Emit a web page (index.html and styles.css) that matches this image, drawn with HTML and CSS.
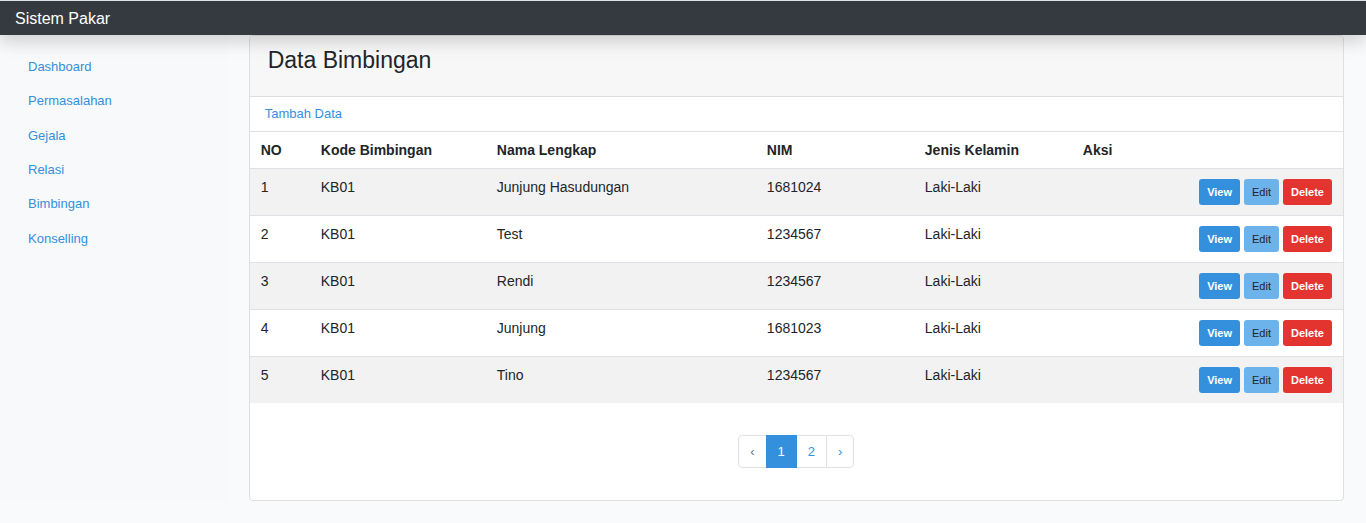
FILE: index.html
```html
<!DOCTYPE html>
<html lang="id">
<head>
<meta charset="utf-8">
<meta name="viewport" content="width=device-width, initial-scale=1">
<title>Sistem Pakar</title>
<link rel="stylesheet" href="styles.css">
</head>
<body>
<header class="topbar"><a class="brand" href="#">Sistem Pakar</a></header>
<div class="layout">
  <nav class="sidebar" aria-label="Menu">
    <ul class="menu">
      <li><a href="#">Dashboard</a></li>
      <li><a href="#">Permasalahan</a></li>
      <li><a href="#">Gejala</a></li>
      <li><a href="#">Relasi</a></li>
      <li><a href="#">Bimbingan</a></li>
      <li><a href="#">Konselling</a></li>
    </ul>
  </nav>
  <main class="content">
    <section class="card">
      <div class="card-header"><h1 class="title">Data Bimbingan</h1></div>
      <div class="toolbar"><a href="#">Tambah Data</a></div>
      <table class="table">
        <colgroup><col class="col-no"><col class="col-kode"><col class="col-nama"><col class="col-nim"><col class="col-jenis"><col></colgroup>
        <thead>
          <tr><th scope="col">NO</th><th scope="col">Kode Bimbingan</th><th scope="col">Nama Lengkap</th><th scope="col">NIM</th><th scope="col">Jenis Kelamin</th><th scope="col">Aksi</th></tr>
        </thead>
        <tbody>
          <tr><td>1</td><td>KB01</td><td>Junjung Hasudungan</td><td>1681024</td><td>Laki-Laki</td><td><div class="actions"><button class="btn view" type="button">View</button><button class="btn edit" type="button">Edit</button><button class="btn delete" type="button">Delete</button></div></td></tr>
          <tr><td>2</td><td>KB01</td><td>Test</td><td>1234567</td><td>Laki-Laki</td><td><div class="actions"><button class="btn view" type="button">View</button><button class="btn edit" type="button">Edit</button><button class="btn delete" type="button">Delete</button></div></td></tr>
          <tr><td>3</td><td>KB01</td><td>Rendi</td><td>1234567</td><td>Laki-Laki</td><td><div class="actions"><button class="btn view" type="button">View</button><button class="btn edit" type="button">Edit</button><button class="btn delete" type="button">Delete</button></div></td></tr>
          <tr><td>4</td><td>KB01</td><td>Junjung</td><td>1681023</td><td>Laki-Laki</td><td><div class="actions"><button class="btn view" type="button">View</button><button class="btn edit" type="button">Edit</button><button class="btn delete" type="button">Delete</button></div></td></tr>
          <tr><td>5</td><td>KB01</td><td>Tino</td><td>1234567</td><td>Laki-Laki</td><td><div class="actions"><button class="btn view" type="button">View</button><button class="btn edit" type="button">Edit</button><button class="btn delete" type="button">Delete</button></div></td></tr>
        </tbody>
      </table>
      <nav class="pager" aria-label="Halaman">
        <ul class="pages">
          <li><span class="page disabled">‹</span></li>
          <li><span class="page active" aria-current="page">1</span></li>
          <li><a class="page" href="#">2</a></li>
          <li><a class="page" href="#">›</a></li>
        </ul>
      </nav>
    </section>
  </main>
</div>
</body>
</html>
```

FILE: styles.css
```css
* { box-sizing: border-box; }
body {
  margin: 0;
  background: #f8fafc;
  color: #212529;
  font: 14px/16px "Liberation Sans", Arial, sans-serif;
}
a { color: #3490dc; text-decoration: none; }
ul { margin: 0; padding: 0; list-style: none; }

.topbar {
  position: sticky;
  top: 0;
  z-index: 10;
  display: flex;
  align-items: center;
  height: 35px;
  padding: 1px 15px 0;
  border-top: 1px solid #dee2e6;
  background: #343a40;
  box-shadow: 0 8px 16px rgba(0, 0, 0, .15);
}
.brand { color: #fff; font-size: 16px; line-height: 24px; }

.layout { display: flex; padding-bottom: 22px; }
.sidebar { flex: 0 0 16.6667%; background: #f8f9fa; padding-top: 15px; }
.menu { display: grid; grid-auto-rows: 1fr; min-height: 206px; font-size: 13px; }
.menu a { display: flex; align-items: center; height: 100%; padding: 0 28px; }
.content { flex: 1; min-width: 0; padding: 0 22px 0 21px; }

.card { border: 1px solid #dfdfdf; border-radius: 4px; background: #fff; }
.card-header {
  height: 61px;
  padding: 10px 18px;
  border-bottom: 1px solid #dfdfdf;
  border-radius: 3px 3px 0 0;
  background: #f7f7f7;
}
.title { margin: 0; font-size: 23px; font-weight: 400; line-height: 28px; }
.toolbar { padding: 9px 15px; font-size: 13px; }

.table { width: 100%; table-layout: fixed; border-collapse: separate; border-spacing: 0; }
.col-no { width: 5.5%; }
.col-kode { width: 16.1%; }
.col-nama { width: 24.7%; }
.col-nim, .col-jenis { width: 14.45%; }
.table th, .table td {
  padding: 10px 11px;
  border-top: 1px solid #dee2e6;
  text-align: left;
  vertical-align: top;
}
.table tbody tr:nth-child(odd) { background: #f2f2f2; }

.actions { display: flex; justify-content: flex-end; gap: 4px; }
.btn {
  height: 26px;
  padding: 0 8px;
  border: 0;
  border-radius: 3px;
  color: #fff;
  font: bold 11px/16px "Liberation Sans", Arial, sans-serif;
}
.view { background: #3490dc; }
.edit { background: #6cb2eb; color: #212529; font-weight: 400; }
.delete { background: #e3342f; }

.pager { display: flex; justify-content: center; padding: 32px 0; }
.pages { display: flex; font-size: 13px; }
.pages li + li { margin-left: -1px; }
.page {
  display: block;
  padding: 8px 11px;
  border: 1px solid #dee2e6;
  background: #fff;
  line-height: 15px;
}
.pages li:first-child .page { border-radius: 4px 0 0 4px; }
.pages li:last-child .page { border-radius: 0 4px 4px 0; }
.disabled { color: #6c757d; }
.active { position: relative; border-color: #3490dc; background: #3490dc; color: #fff; }
```
